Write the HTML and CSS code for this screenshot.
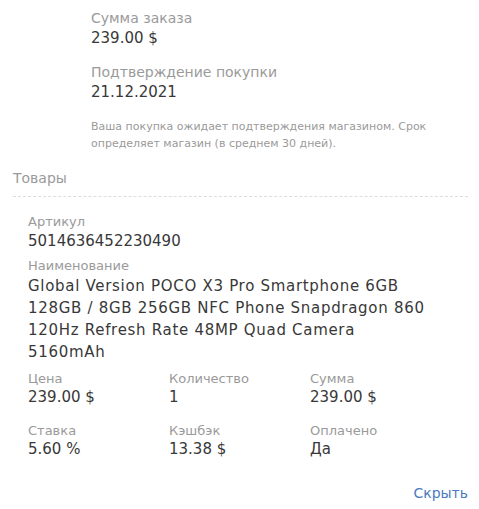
FILE: index.html
```html
<!DOCTYPE html>
<html lang="ru">
<head>
    <meta charset="UTF-8">
    <title>Заказ</title>
    <link rel="stylesheet" href="styles.css">
</head>
<body>
    <div class="order">
        <div class="summary">
            <div class="field">
                <div class="label">Сумма заказа</div>
                <div class="value">239.00 $</div>
            </div>
            <div class="field">
                <div class="label">Подтверждение покупки</div>
                <div class="value">21.12.2021</div>
            </div>
            <p class="note">Ваша покупка ожидает подтверждения магазином. Срок определяет магазин (в среднем 30 дней).</p>
        </div>

        <div class="goods">
            <h3 class="goods-title">Товары</h3>
            <div class="item">
                <div class="item-field">
                    <div class="small-label">Артикул</div>
                    <div class="value">5014636452230490</div>
                </div>
                <div class="item-field">
                    <div class="small-label">Наименование</div>
                    <div class="value name">Global Version POCO X3 Pro Smartphone 6GB 128GB / 8GB 256GB NFC Phone Snapdragon 860 120Hz Refresh Rate 48MP Quad Camera 5160mAh</div>
                </div>
                <div class="item-grid">
                    <div>
                        <div class="small-label">Цена</div>
                        <div class="value">239.00 $</div>
                    </div>
                    <div>
                        <div class="small-label">Количество</div>
                        <div class="value">1</div>
                    </div>
                    <div>
                        <div class="small-label">Сумма</div>
                        <div class="value">239.00 $</div>
                    </div>
                    <div>
                        <div class="small-label">Ставка</div>
                        <div class="value">5.60 %</div>
                    </div>
                    <div>
                        <div class="small-label">Кэшбэк</div>
                        <div class="value">13.38 $</div>
                    </div>
                    <div>
                        <div class="small-label">Оплачено</div>
                        <div class="value">Да</div>
                    </div>
                </div>
            </div>
            <div class="actions">
                <a href="#" class="hide-link">Скрыть</a>
            </div>
        </div>
    </div>
</body>
</html>
```

FILE: styles.css
```css
* {
    margin: 0;
    padding: 0;
    box-sizing: border-box;
}

body {
    font-family: 'DejaVu Sans', 'Liberation Sans', sans-serif;
    background: white;
    color: #333;
}

.order {
    padding: 8px 11px 0 13px;
}

.summary {
    padding-left: 78px;
}

.field {
    margin-bottom: 14px;
}

.label {
    font-size: 14px;
    line-height: 20px;
    color: #9a9a9a;
}

.value {
    font-size: 15px;
    line-height: 20px;
    color: #383838;
}

.note {
    margin-top: 16px;
    font-size: 11px;
    line-height: 17px;
    color: #9a9a9a;
}

.goods {
    margin-top: 16px;
}

.goods-title {
    font-size: 14px;
    font-weight: normal;
    line-height: 20px;
    color: #9a9a9a;
    padding-bottom: 8px;
    border-bottom: 1px dashed #ddd;
}

.item {
    padding: 16px 17px 0 15px;
}

.item-field {
    margin-bottom: 6px;
}

.small-label {
    font-size: 13px;
    line-height: 18px;
    color: #9a9a9a;
}

.name {
    max-width: 399px;
    line-height: 22px;
    letter-spacing: 0.7px;
}

.item-grid {
    display: grid;
    grid-template-columns: repeat(3, 1fr);
    row-gap: 15px;
    margin-top: 7px;
}

.item-grid .small-label {
    margin-bottom: -1px;
}

.actions {
    display: flex;
    justify-content: flex-end;
    margin-top: 24px;
}

.hide-link {
    font-size: 14px;
    line-height: 20px;
    color: #4a7bc0;
    text-decoration: none;
}
```
